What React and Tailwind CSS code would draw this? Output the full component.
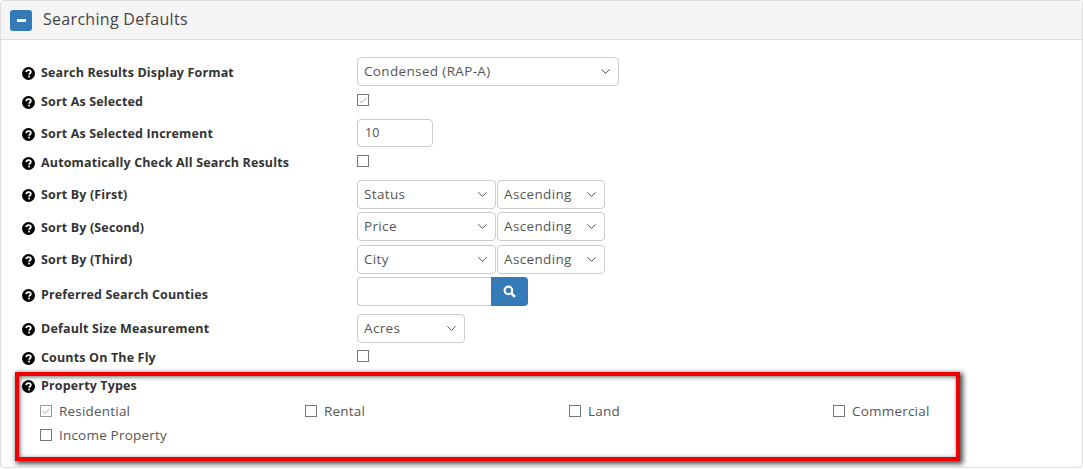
import { ChevronDown, Check } from "lucide-react";

const HelpIcon = () => (
  <svg viewBox="0 0 24 24" className="w-[13px] h-[13px] shrink-0 text-black">
    <circle cx="12" cy="12" r="12" fill="currentColor" />
    <path d="M7.8 9.4c.2-2.4 2-3.8 4.3-3.8 2.4 0 4.2 1.4 4.2 3.5 0 2.8-3.1 2.8-3.1 5" fill="none" stroke="#fff" strokeWidth="3.2" />
    <rect x="11.4" y="16" width="3.2" height="3.2" fill="#fff" />
  </svg>
);

const Label = ({ text, top }) => (
  <div className={`w-[335px] h-[18px] flex items-center gap-[6px] shrink-0 ${top}`}>
    <HelpIcon />
    <span className="text-[12.5px] leading-[18px] font-bold text-[#333] tracking-[0.15px]">{text}</span>
  </div>
);

const Select = ({ value, width }) => (
  <div className={`${width} h-[29px] bg-white border border-[#ccc] rounded flex items-center justify-between pl-[6px] pr-[5px] text-[13.5px] text-[#555] tracking-[0.35px]`}>
    <span>{value}</span>
    <ChevronDown size={15} strokeWidth={1.5} className="text-[#444]" />
  </div>
);

const Box = ({ checked, light }) => (
  <span className={`w-[12px] h-[12px] border ${light ? "border-[#999]" : "border-[#767676]"} bg-white flex items-center justify-center shrink-0`}>
    {checked && <Check size={11} strokeWidth={1.5} className="text-[#777]" />}
  </span>
);

const Row = ({ label, height, labelTop, ctrlTop, children }) => (
  <div className={`flex items-start ${height}`}>
    <Label text={label} top={labelTop} />
    <div className={`flex items-center gap-px ${ctrlTop}`}>{children}</div>
  </div>
);

const SortRow = ({ label, value, height, labelTop }) => (
  <Row label={label} height={height} labelTop={labelTop} ctrlTop="mt-px">
    <Select value={value} width="w-[139px]" />
    <Select value="Ascending" width="w-[108px]" />
  </Row>
);

const TypeItem = ({ text, checked }) => (
  <div className="flex items-center gap-[7px] h-[24px]">
    <Box checked={checked} light={checked} />
    <span className="text-[13.5px] text-[#555] tracking-[0.2px]">{text}</span>
  </div>
);

export default function App() {
  return (
    <div className="w-[1083px] h-[469px] bg-white font-['Open_Sans',sans-serif] overflow-hidden">
      <div className="relative h-[468px] border border-[#ddd] rounded overflow-hidden">
        <div className="h-[39px] bg-[#f5f5f5] border-b border-[#ddd] flex items-center pl-[9px] gap-[11px]">
          <span className="w-[22px] h-[21px] bg-[#337ab7] rounded-[3px] flex items-center justify-center">
            <span className="w-[9px] h-[3px] bg-white" />
          </span>
          <span className="text-[16px] text-[#444] tracking-[0.3px] pb-[3px]">Searching Defaults</span>
        </div>

        <div className="pl-[21px] pt-[17px]">
          <Row label="Search Results Display Format" height="h-[30px]" labelTop="mt-[7px]" ctrlTop="mt-0">
            <Select value="Condensed (RAP-A)" width="w-[262px]" />
          </Row>
          <Row label="Sort As Selected" height="h-[31px]" labelTop="mt-[6px]" ctrlTop="mt-[7px]">
            <Box checked />
          </Row>
          <Row label="Sort As Selected Increment" height="h-[34px]" labelTop="mt-[7px]" ctrlTop="mt-px">
            <div className="w-[76px] h-[28px] border border-[#ccc] rounded flex items-center pl-[7px] text-[12.5px] text-[#555]">10</div>
          </Row>
          <Row label="Automatically Check All Search Results" height="h-[27px]" labelTop="mt-[2px]" ctrlTop="mt-[3px]">
            <Box />
          </Row>
          <SortRow label="Sort By (First)" value="Status" height="h-[32px]" labelTop="mt-[7px]" />
          <SortRow label="Sort By (Second)" value="Price" height="h-[33px]" labelTop="mt-[8px]" />
          <SortRow label="Sort By (Third)" value="City" height="h-[32px]" labelTop="mt-[7px]" />
          <Row label="Preferred Search Counties" height="h-[37px]" labelTop="mt-[10px]" ctrlTop="mt-px">
            <div className="flex">
              <div className="w-[134px] h-[29px] border border-[#ccc] border-r-0 rounded-l" />
              <div className="w-[37px] h-[29px] bg-[#337ab7] rounded-r flex items-center justify-center">
                <svg viewBox="0 0 24 24" className="w-[13px] h-[13px]" fill="none" stroke="#fff">
                  <circle cx="10" cy="10" r="7" strokeWidth="4" />
                  <path d="M15.5 15.5L22 22" strokeWidth="5" />
                </svg>
              </div>
            </div>
          </Row>
          <Row label="Default Size Measurement" height="h-[35px]" labelTop="mt-[7px]" ctrlTop="mt-px">
            <Select value="Acres" width="w-[108px]" />
          </Row>
          <Row label="Counts On The Fly" height="h-[28px]" labelTop="mt-px" ctrlTop="mt-[2px]">
            <Box />
          </Row>
          <div className="h-[22px]">
            <Label text="Property Types" top="mt-px" />
          </div>
          <div className="grid grid-cols-[265px_264px_264px_264px] w-[1058px] pl-[18px]">
            <TypeItem text="Residential" checked />
            <TypeItem text="Rental" />
            <TypeItem text="Land" />
            <TypeItem text="Commercial" />
            <TypeItem text="Income Property" />
          </div>
        </div>

        {/* red highlight box drawn over the section */}
        <div className="absolute left-[14px] top-[371px] w-[945px] h-[89px] border-[4px] border-[#f00000] shadow-[2px_2px_5px_1px_rgba(0,0,0,0.7),inset_1px_1px_4px_rgba(0,0,0,0.6)]" />
      </div>
    </div>
  );
}
